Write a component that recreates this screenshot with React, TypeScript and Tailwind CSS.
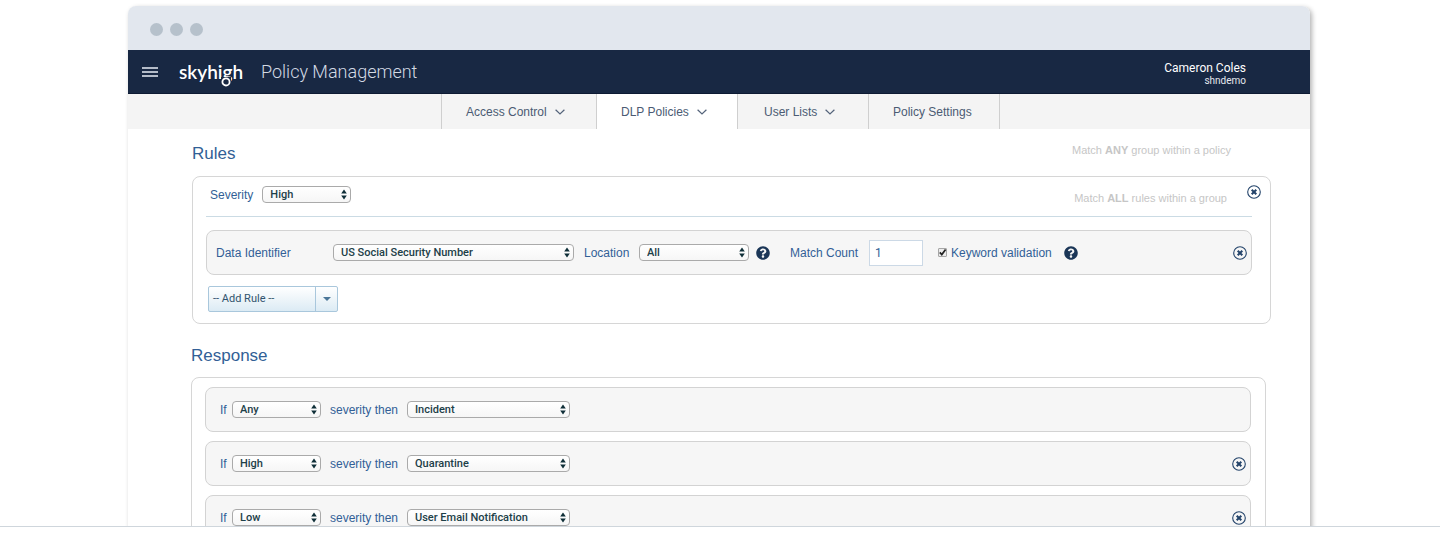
import { useState } from 'react';
import type { ReactNode } from 'react';
import { FaQuestionCircle } from 'react-icons/fa';

const TABS = [
  { label: 'Access Control', menu: true, className: 'w-[155px] pl-6' },
  { label: 'DLP Policies', menu: true, className: 'w-[141px] pl-6 bg-white' },
  { label: 'User Lists', menu: true, className: 'w-[131px] pl-[26px]' },
  { label: 'Policy Settings', menu: false, className: 'w-[132px] pl-6' },
];

const SEVERITIES = ['Any', 'High', 'Medium', 'Low'];
const ACTIONS = ['Incident', 'Quarantine', 'User Email Notification'];

const RESPONSES = [
  { severity: 'Any', action: 'Incident', removable: false },
  { severity: 'High', action: 'Quarantine', removable: true },
  { severity: 'Low', action: 'User Email Notification', removable: true },
];

function Chevron() {
  return (
    <svg viewBox="0 0 10 6" className="w-[10px] h-[6px]" fill="none" stroke="#54637a" strokeWidth="1.2">
      <path d="M0.6 0.7 L5 5 L9.4 0.7" />
    </svg>
  );
}

function RemoveButton({ label }: { label: string }) {
  return (
    <button type="button" aria-label={label} className="block w-[14px] h-[14px] shrink-0">
      <svg viewBox="0 0 14 14" className="w-full h-full" fill="none" stroke="#23436a">
        <circle cx="7" cy="7" r="6.3" strokeWidth="1.1" />
        <path d="M4.7 4.7 L9.3 9.3 M9.3 4.7 L4.7 9.3" strokeWidth="2" />
      </svg>
    </button>
  );
}

function HelpButton({ label }: { label: string }) {
  return (
    <button type="button" aria-label={label} className="block shrink-0 text-[#1b3657]">
      <FaQuestionCircle className="w-[14px] h-[14px]" />
    </button>
  );
}

function Picker({ id, options, initial, width }: { id: string; options: string[]; initial: string; width: string }) {
  const [value, setValue] = useState(initial);
  return (
    <span className={`relative block shrink-0 ${width}`}>
      <select
        id={id}
        value={value}
        onChange={(e) => setValue(e.target.value)}
        className="block w-full h-[17px] appearance-none rounded-[4px] border border-[#aaaaaa] bg-linear-to-b from-white to-[#f6f6f6] pl-[7px] pr-4 font-[Roboto,sans-serif] text-[11px] leading-[15px] font-medium text-[#1d4048]"
      >
        {options.map((o) => (
          <option key={o}>{o}</option>
        ))}
      </select>
      <svg viewBox="0 0 6 10" className="pointer-events-none absolute right-1 top-[3px] w-[6px] h-[11px]" fill="#0f2f38">
        <path d="M3 0 L5.8 4 H0.2 Z M3 10 L5.8 6 H0.2 Z" />
      </svg>
    </span>
  );
}

function Card({ children }: { children: ReactNode }) {
  return <div className="flex h-[45px] items-center rounded-lg border border-[#d3d3d3] bg-[#f6f6f6]">{children}</div>;
}

function Header() {
  return (
    <header className="flex h-11 items-center border-b border-[#0d1a33] bg-[#182843] pl-[14px] pr-16">
      <button type="button" aria-label="Menu" className="flex w-4 flex-col gap-[2px]">
        <span className="block h-[2px] bg-[#b4bcc9]" />
        <span className="block h-[2px] bg-[#b4bcc9]" />
        <span className="block h-[2px] bg-[#b4bcc9]" />
      </button>
      <a href="#" className="relative ml-[21px] w-[62px] font-[Lato,sans-serif] text-[19px] leading-6 font-semibold text-white">
        skyhigh
        {/* ring that closes the tail of the g */}
        <svg viewBox="0 0 10 10" className="absolute left-[42px] top-[17px] h-[10px] w-[10px]" fill="#182843" stroke="#fff" strokeWidth="1.8">
          <path d="M0 0 H10 V10 H0 Z" stroke="none" />
          <circle cx="5" cy="4.9" r="3.6" />
        </svg>
      </a>
      <h1 className="ml-5 font-[Roboto,sans-serif] text-[18px] leading-6 font-light text-[#d3dae4]">Policy Management</h1>
      <div className="ml-auto pt-1 text-right font-[Roboto,sans-serif] text-white">
        <p className="text-[12px] leading-[14px]">Cameron Coles</p>
        <p className="text-[10px] leading-3 text-[#e3e7ed]">shndemo</p>
      </div>
    </header>
  );
}

function RulesSection() {
  const [keyword, setKeyword] = useState(true);
  return (
    <section className="pl-16 pr-[39px] pt-[15px]">
      <div className="mb-3 flex items-start justify-between">
        <h2 className="text-[17px] leading-5 text-[#325f96]">Rules</h2>
        <p className="mr-10 text-[11px] leading-3 text-[#c6c6c6]">
          Match <b>ANY</b> group within a policy
        </p>
      </div>

      <div className="rounded-lg border border-[#d6d6d6] pb-[11px]">
        <div className="flex pl-[17px] pr-[9px] pt-2 pb-3">
          <div className="flex h-[19px] items-center gap-[9px]">
            <label htmlFor="rule-severity">Severity</label>
            <Picker id="rule-severity" options={SEVERITIES} initial="High" width="w-[89px]" />
          </div>
          <p className="ml-auto mr-5 self-end text-[11px] leading-3 text-[#c6c6c6]">
            Match <b>ALL</b> rules within a group
          </p>
          <RemoveButton label="Remove group" />
        </div>

        <div className="ml-[13px] mr-[18px] border-t border-[#cbdbe4] pt-[13px]">
          <Card>
            <label htmlFor="identifier" className="ml-[9px] w-[117px]">Data Identifier</label>
            <Picker id="identifier" options={['US Social Security Number']} initial="US Social Security Number" width="w-[241px]" />
            <label htmlFor="location" className="ml-[10px] w-[55px]">Location</label>
            <Picker id="location" options={['All']} initial="All" width="w-[110px]" />
            <span className="ml-[7px]">
              <HelpButton label="About location" />
            </span>
            <label htmlFor="match-count" className="ml-5 w-[79px]">Match Count</label>
            <input
              id="match-count"
              type="text"
              defaultValue="1"
              className="h-[26px] w-[54px] border border-[#ccd9e6] bg-white px-[5px] font-[Roboto,sans-serif] text-[12px] text-[#325f96]"
            />
            <span className="relative ml-[15px] block h-[9px] w-[9px]">
              <input
                id="keyword"
                type="checkbox"
                checked={keyword}
                onChange={(e) => setKeyword(e.target.checked)}
                className="block h-full w-full appearance-none rounded-[1px] border border-[#a6a6a6] bg-[#ececec]"
              />
              {keyword && (
                <svg viewBox="0 0 9 9" className="pointer-events-none absolute inset-0" fill="none" stroke="#222" strokeWidth="1.7">
                  <path d="M1.8 4.4 L3.8 6.6 L7.6 1.4" />
                </svg>
              )}
            </span>
            <label htmlFor="keyword" className="ml-1 mr-3">Keyword validation</label>
            <HelpButton label="About keyword validation" />
            <span className="ml-auto mr-1">
              <RemoveButton label="Remove rule" />
            </span>
          </Card>

          <button
            type="button"
            className="ml-[2px] mt-[11px] flex h-[26px] w-[130px] items-stretch rounded-[2px] border border-[#a9c7dc] bg-linear-to-b from-white to-[#dcebf4] font-[Roboto,sans-serif] text-[11px] text-[#31536e]"
          >
            <span className="flex flex-1 items-center pl-1 [font-variant-ligatures:none]">-- Add Rule --</span>
            <span className="flex w-[22px] items-center justify-center border-l border-[#a9c7dc]">
              <svg viewBox="0 0 8 4" className="w-2 h-1" fill="#4a7698">
                <path d="M0 0 H8 L4 4 Z" />
              </svg>
            </span>
          </button>
        </div>
      </div>
    </section>
  );
}

function ResponseSection() {
  return (
    <section className="pl-[63px] pr-11 pt-[22px]">
      <h2 className="mb-[11px] text-[17px] leading-5 text-[#325f96]">Response</h2>
      <div className="flex flex-col gap-[9px] rounded-lg border border-[#d6d6d6] py-[9px] pl-[13px] pr-[14px]">
        {RESPONSES.map((r, i) => (
          <Card key={r.severity}>
            <label htmlFor={`severity-${i}`} className="ml-[14px] w-3">If</label>
            <Picker id={`severity-${i}`} options={SEVERITIES} initial={r.severity} width="w-[89px]" />
            <label htmlFor={`action-${i}`} className="ml-[9px] w-[77px]">severity then</label>
            <Picker id={`action-${i}`} options={ACTIONS} initial={r.action} width="w-[163px]" />
            {r.removable && (
              <span className="ml-auto mr-1">
                <RemoveButton label="Remove response" />
              </span>
            )}
          </Card>
        ))}
      </div>
    </section>
  );
}

export default function App() {
  return (
    <div className="flex h-screen flex-col bg-white pb-[6px] font-['Liberation_Sans',Arial,sans-serif] text-[12px] leading-4 text-[#325f96]">
      <div className="min-h-0 flex-1 overflow-hidden border-b border-[#cfd6dc] pl-32 pr-[130px] pt-[6px]">
        <div className="rounded-t-lg bg-white shadow-[2px_2px_5px_rgba(0,0,0,0.3)]">
          {/* browser chrome */}
          <div className="flex h-11 items-center gap-[7px] rounded-t-lg bg-[#e2e7ee] pl-[22px] pt-[3px]">
            <span className="h-[13px] w-[13px] rounded-full bg-[#b6c1cb]" />
            <span className="h-[13px] w-[13px] rounded-full bg-[#b6c1cb]" />
            <span className="h-[13px] w-[13px] rounded-full bg-[#b6c1cb]" />
          </div>
          <Header />
          <nav className="flex h-[35px] justify-center bg-[#f4f4f4] pl-[3px] text-[#4b5b73]">
            {TABS.map((tab) => (
              <a
                key={tab.label}
                href="#"
                className={`flex items-center gap-2 border-l border-[#cfcfcf] last:border-r ${tab.className}`}
              >
                {tab.label}
                {tab.menu && <Chevron />}
              </a>
            ))}
          </nav>
          <RulesSection />
          <ResponseSection />
        </div>
      </div>
    </div>
  );
}
